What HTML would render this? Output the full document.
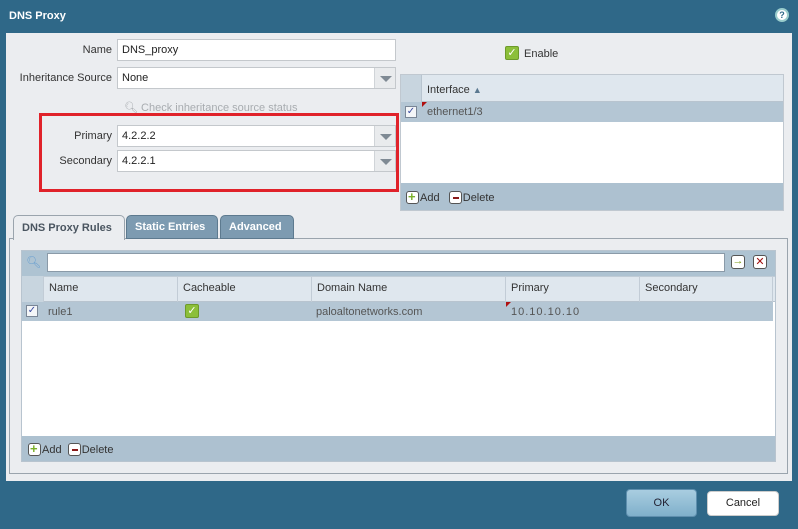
<!DOCTYPE html>
<html><head><style>
*{box-sizing:border-box;margin:0;padding:0}
body{width:798px;height:529px;overflow:hidden;background:#2f6888;font-family:"Liberation Sans","DejaVu Sans",sans-serif;font-size:11px;color:#333;position:relative}
.a{position:absolute}
.inp{position:absolute;background:#fff;border:1px solid #c4c8cc;padding:0 4px;line-height:20px;font-size:11px;color:#222}
.dd{position:absolute;right:0;top:0;bottom:0;width:21px;background:#e9ebed;border-left:1px solid #d0d4d8}
.dd:after{content:"";position:absolute;left:5px;top:8px;border-left:6px solid transparent;border-right:6px solid transparent;border-top:6px solid #7f8a94}
.lbl{position:absolute;text-align:right;width:110px}
.cb{position:absolute;width:12px;height:12px;border:1px solid #7a8696;background:#f4f6f8;font-size:10px;line-height:10px;text-align:center;color:#3a4aa0}
.gchk{position:absolute;width:14px;height:14px;background:#8cbf3a;border:1px solid #6d9a2a;border-radius:2px;color:#fff;font-size:11px;line-height:12px;text-align:center;font-weight:bold}
.th{position:absolute;border-right:1px solid #c2ccd6;padding:6px 5px}
.btnic{display:inline-block;width:13px;height:13px;border:1px solid #555;border-radius:3px;background:#fff;vertical-align:-3px;position:relative;margin-right:1px}
</style></head><body>
<div class="a" style="left:0;top:0;width:798px;height:33px;background:#2f6888"></div>
<div class="a" style="left:9px;top:10px;color:#fff;font-weight:bold;font-size:11px">DNS Proxy</div>
<div class="a" style="left:775px;top:8px;width:14px;height:14px;border-radius:50%;background:#fff;border:2px solid #9cc;color:#2f6888;font-weight:bold;font-size:9px;line-height:10px;text-align:center">?</div>
<div class="a" style="left:6px;top:33px;width:786px;height:448px;background:#ebedf0"></div>

<div class="lbl" style="left:2px;top:44px">Name</div>
<div class="inp" style="left:117px;top:39px;width:279px;height:22px">DNS_proxy</div>
<div class="lbl" style="left:2px;top:72px">Inheritance Source</div>
<div class="inp" style="left:117px;top:67px;width:279px;height:22px">None<div class="dd"></div></div>
<div class="a" style="left:124px;top:101px;color:#a8acb0">🔍︎ Check inheritance source status</div>
<div class="a" style="left:39px;top:113px;width:360px;height:79px;border:3px solid #e0222a"></div>
<div class="lbl" style="left:2px;top:130px">Primary</div>
<div class="inp" style="left:117px;top:125px;width:279px;height:22px">4.2.2.2<div class="dd"></div></div>
<div class="lbl" style="left:2px;top:155px">Secondary</div>
<div class="inp" style="left:117px;top:150px;width:279px;height:22px">4.2.2.1<div class="dd"></div></div>

<div class="gchk" style="left:505px;top:46px">✓</div>
<div class="a" style="left:524px;top:48px">Enable</div>

<div class="a" style="left:400px;top:74px;width:384px;height:137px;border:1px solid #c0c8d0;background:#fff">
 <div class="a" style="left:0;top:0;width:382px;height:27px;background:#dfe7ee;border-bottom:1px solid #b8c4cf"></div>
 <div class="a" style="left:0;top:0;width:21px;height:27px;background:#c8d5df;border-right:1px solid #b8c4cf"></div>
 <div class="a" style="left:26px;top:9px">Interface <span style="color:#5a7890;font-size:9px">▲</span></div>
 <div class="a" style="left:0;top:27px;width:382px;height:20px;background:#b4c6d4"></div>
 <div class="cb" style="left:4px;top:31px">✓</div>
 <div class="a" style="left:21px;top:27px;border-top:5px solid #b01010;border-right:5px solid transparent"></div>
 <div class="a" style="left:26px;top:31px;color:#555">ethernet1/3</div>
 <div class="a" style="left:0;top:108px;width:382px;height:27px;background:#adc1d0"></div>
 <div class="a" style="left:5px;top:116px"><span class="btnic"><b style="position:absolute;left:1px;top:-3px;color:#7bb02a;font-size:13px">+</b></span>Add &nbsp;&nbsp;<span class="btnic"><b style="position:absolute;left:3px;top:5px;width:6px;height:2px;background:#8a1a1a"></b></span>Delete</div>
</div>

<div class="a" style="left:9px;top:238px;width:779px;height:236px;border:1px solid #9aa4ad;background:#ebedf0"></div>
<div class="a" style="left:13px;top:215px;width:112px;height:25px;background:#ebedf0;border:1px solid #9aa4ad;border-bottom:none;border-radius:5px 5px 0 0;font-weight:bold;color:#4a5560;padding:6px 8px">DNS Proxy Rules</div>
<div class="a" style="left:126px;top:215px;width:92px;height:24px;background:#7d9bb1;border:1px solid #5d7a8f;border-radius:5px 5px 0 0;font-weight:bold;color:#fff;padding:5px 8px">Static Entries</div>
<div class="a" style="left:220px;top:215px;width:74px;height:24px;background:#7d9bb1;border:1px solid #5d7a8f;border-radius:5px 5px 0 0;font-weight:bold;color:#fff;padding:5px 8px">Advanced</div>

<div class="a" style="left:21px;top:250px;width:755px;height:212px;background:#fff;border:1px solid #b8c4cf">
 <div class="a" style="left:0;top:0;width:753px;height:25px;background:#aec3d2"></div>
 <div class="a" style="left:4px;top:4px;font-size:12px;color:#6aa0d0">🔍︎</div>
 <div class="a" style="left:25px;top:2px;width:678px;height:19px;background:#fff;border:1px solid #8a9aa8"></div>
 <div class="a" style="left:709px;top:4px;width:14px;height:14px;border:1px solid #555;border-radius:3px;background:#fff;color:#7a9a10;font-size:11px;line-height:11px;text-align:center;font-weight:bold">→</div>
 <div class="a" style="left:731px;top:4px;width:14px;height:14px;border:1px solid #555;border-radius:3px;background:#fff;color:#a01010;font-size:11px;line-height:12px;text-align:center;font-weight:bold">✕</div>
 <div class="a" style="left:0;top:25px;width:753px;height:26px;background:#dfe7ee;border-top:1px solid #c0ccd6;border-bottom:1px solid #b8c4cf"></div>
 <div class="th" style="left:0;top:25px;width:22px;height:26px;background:#c8d5df"></div>
 <div class="th" style="left:22px;top:25px;width:134px;height:26px">Name</div>
 <div class="th" style="left:156px;top:25px;width:134px;height:26px">Cacheable</div>
 <div class="th" style="left:290px;top:25px;width:194px;height:26px">Domain Name</div>
 <div class="th" style="left:484px;top:25px;width:134px;height:26px">Primary</div>
 <div class="th" style="left:618px;top:25px;width:133px;height:26px">Secondary</div>
 <div class="a" style="left:0;top:51px;width:751px;height:19px;background:#b4c6d4"></div>
 <div class="cb" style="left:4px;top:54px">✓</div>
 <div class="a" style="left:26px;top:55px;color:#555">rule1</div>
 <div class="gchk" style="left:163px;top:53px">✓</div>
 <div class="a" style="left:294px;top:55px;color:#555">paloaltonetworks.com</div>
 <div class="a" style="left:484px;top:51px;border-top:5px solid #b01010;border-right:5px solid transparent"></div>
 <div class="a" style="left:489px;top:55px;color:#555;letter-spacing:1px">10.10.10.10</div>
 <div class="a" style="left:0;top:185px;width:753px;height:25px;background:#adc1d0"></div>
 <div class="a" style="left:6px;top:192px"><span class="btnic"><b style="position:absolute;left:1px;top:-3px;color:#7bb02a;font-size:13px">+</b></span>Add &nbsp;<span class="btnic"><b style="position:absolute;left:3px;top:5px;width:6px;height:2px;background:#8a1a1a"></b></span>Delete</div>
</div>

<div class="a" style="left:626px;top:489px;width:71px;height:28px;border-radius:4px;background:linear-gradient(#a9cde0,#7fb0cb);border:1px solid #5e8fae;text-align:center;line-height:26px;color:#223">OK</div>
<div class="a" style="left:707px;top:491px;width:72px;height:25px;border-radius:4px;background:#fff;border:1px solid #ccc;text-align:center;line-height:23px;color:#222">Cancel</div>
</body></html>
